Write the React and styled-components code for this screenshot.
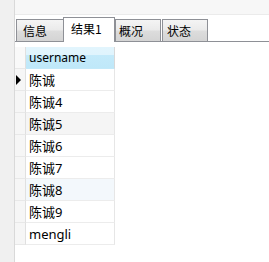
import React from "react";
import styled, { createGlobalStyle } from "styled-components";

const GlobalStyle = createGlobalStyle`
  html, body { margin: 0; padding: 0; background: #ffffff; }
  body { font-family: "Noto Sans", "Noto Sans CJK SC", sans-serif; color: #000; }
`;

const Page = styled.div`
  display: flex;
  width: 269px;
  height: 262px;
  overflow: hidden;
  background: #ffffff;
`;

const Sidebar = styled.div`
  width: 14px;
  flex-shrink: 0;
  background: #f0f0f0;
`;

const Main = styled.div`
  flex: 1;
  display: flex;
  flex-direction: column;
  border-left: 1px solid #d9d9d9;
`;

const TopBar = styled.div`
  height: 14px;
  background: #f7f7f7;
  border-bottom: 1px solid #ebebeb;
`;

const TabBar = styled.div`
  display: flex;
  align-items: flex-end;
  height: 26px;
  padding-left: 1px;
  border-bottom: 1px solid #8e9096;
`;

const Tab = styled.div`
  box-sizing: border-box;
  position: relative;
  display: flex;
  align-items: center;
  width: ${(p) => p.$w}px;
  height: ${(p) => (p.$active ? 25 : 22)}px;
  margin-left: ${(p) => p.$ml || 0}px;
  margin-bottom: ${(p) => (p.$active ? -1 : 0)}px;
  padding-left: ${(p) => p.$pl}px;
  padding-bottom: ${(p) => (p.$active ? 3 : 0)}px;
  border: 1px solid #8e9096;
  border-bottom: none;
  background: ${(p) =>
    p.$active ? "#ffffff" : "linear-gradient(#f4f4f4 0%, #ebebeb 45%, #dcdcdc 55%, #d4d4d4 100%)"};
  z-index: ${(p) => (p.$active ? 1 : 0)};
  font-family: "Noto Sans CJK SC", sans-serif;
  font-size: 12px;
  line-height: 14px;
  color: #000;
  white-space: nowrap;
`;

const Grid = styled.div`
  margin-top: 5px;
  display: grid;
  grid-template-columns: 11px 89px;
  width: 100px;
`;

const Indicator = styled.div`
  box-sizing: border-box;
  height: 22px;
  display: flex;
  align-items: center;
  padding-left: 1px;
  border-right: 1px solid #e0e0e0;
  border-bottom: 1px solid #e8e8e8;
  background: ${(p) => (p.$header ? "#f9f9f9" : "#f6f6f6")};
`;

const Arrow = styled.span`
  width: 0;
  height: 0;
  border-top: 5px solid transparent;
  border-bottom: 5px solid transparent;
  border-left: 5px solid #000;
`;

const HeaderCell = styled.div`
  box-sizing: border-box;
  height: 22px;
  display: flex;
  align-items: center;
  padding-left: 3px;
  border-right: 1px solid #d8d8d8;
  border-bottom: 1px solid #c3e9f9;
  background: linear-gradient(#e2f5fd 0%, #e0f4fd 36%, #c4eafa 38%, #bfe8f9 100%);
  font-family: "Noto Sans", sans-serif;
  font-size: 12px;
  color: #000;
`;

const Cell = styled.div`
  box-sizing: border-box;
  height: 22px;
  display: flex;
  align-items: center;
  padding-left: 3px;
  border-right: 1px solid #e6e6e6;
  border-bottom: 1px solid #ececec;
  background: ${(p) => p.$bg || "#ffffff"};
  font-family: "Noto Sans", "Noto Sans CJK SC", sans-serif;
  font-size: 13px;
  color: #000;
  white-space: nowrap;
`;

const tabs = [
  { label: "信息", w: 48, pl: 6 },
  { label: "结果1", w: 52, pl: 7, active: true, ml: -1 },
  { label: "概况", w: 46, pl: 3 },
  { label: "状态", w: 46, pl: 4, ml: 1 },
];

const rows = [
  { name: "陈诚", current: true },
  { name: "陈诚4" },
  { name: "陈诚5", bg: "#f5f5f5" },
  { name: "陈诚6" },
  { name: "陈诚7" },
  { name: "陈诚8", bg: "#f3f8fc" },
  { name: "陈诚9" },
  { name: "mengli" },
];

export default function App() {
  return (
    <>
      <GlobalStyle />
      <Page>
        <Sidebar />
        <Main>
          <TopBar />
          <TabBar>
            {tabs.map((t) => (
              <Tab key={t.label} $w={t.w} $pl={t.pl} $ml={t.ml} $active={t.active}>
                {t.label}
              </Tab>
            ))}
          </TabBar>
          <Grid>
            <Indicator $header />
            <HeaderCell>username</HeaderCell>
            {rows.map((r) => (
              <React.Fragment key={r.name}>
                <Indicator>{r.current && <Arrow />}</Indicator>
                <Cell $bg={r.bg}>{r.name}</Cell>
              </React.Fragment>
            ))}
          </Grid>
        </Main>
      </Page>
    </>
  );
}
